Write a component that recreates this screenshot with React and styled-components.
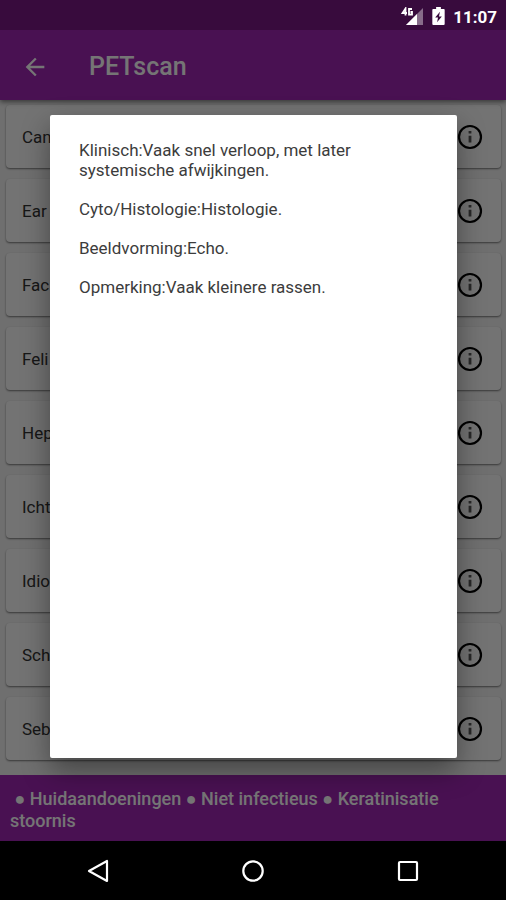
import React from 'react'
import styled, { createGlobalStyle } from 'styled-components'

const GlobalStyle = createGlobalStyle`
  * {
    box-sizing: border-box;
  }
  body {
    margin: 0;
    background: #000;
    font-family: Roboto, sans-serif;
  }
`

const Screen = styled.div`
  display: flex;
  flex-direction: column;
  min-height: 100vh;
`

const Page = styled.div`
  position: relative;
  flex: 1;
  display: flex;
  flex-direction: column;
  background: #f2f2f2;
`

const StatusBar = styled.div`
  position: relative;
  z-index: 2;
  display: flex;
  align-items: center;
  justify-content: flex-end;
  gap: 8px;
  height: 30px;
  padding: 3px 9px 0;
  background: #380b3d;
  color: #fff;
`

const Clock = styled.span`
  font-size: 17px;
  font-weight: 700;
  line-height: 24px;
`

const AppBar = styled.header`
  position: relative;
  display: flex;
  align-items: center;
  gap: 40px;
  height: 70px;
  padding: 3px 21px 0;
  background: #9f25b4;
  color: #fff;
  box-shadow: 0 2px 5px rgba(0, 0, 0, 0.5);
`

const IconButton = styled.button`
  display: flex;
  padding: 0;
  border: 0;
  background: none;
  color: inherit;
`

const Title = styled.h1`
  margin: 0;
  font-size: 25px;
  font-weight: 500;
  line-height: 30px;
`

const List = styled.ul`
  flex: 1;
  display: flex;
  flex-direction: column;
  gap: 11px;
  margin: 0;
  padding: 5px 5px 15px 6px;
  list-style: none;
`

const Card = styled.li`
  display: flex;
  align-items: center;
  justify-content: space-between;
  height: 63px;
  padding: 0 18px 0 16px;
  border-radius: 4px;
  background: #fafafa;
  box-shadow: 0 1px 2px rgba(0, 0, 0, 0.5);
  color: #333;
  font-size: 17px;
`

const Path = styled.footer`
  padding: 13px 10px 9px;
  background: #9f25b4;
  color: #fff;
  font-size: 18px;
  font-weight: 500;
  line-height: 22px;
`

const Scrim = styled.div`
  position: absolute;
  inset: 0;
  z-index: 1;
  display: flex;
  padding: 115px 49px 83px 50px;
  background: rgba(0, 0, 0, 0.54);
`

const Dialog = styled.div`
  flex: 1;
  padding: 25px 29px;
  border-radius: 2px;
  background: #fff;
  box-shadow: 0 12px 28px rgba(0, 0, 0, 0.4);
  color: #3c3c3c;
  font-size: 17px;
  line-height: 20px;
`

const Paragraph = styled.p`
  margin: 0 0 19px;
`

const NavBar = styled.nav`
  display: flex;
  align-items: center;
  justify-content: space-around;
  height: 59px;
  padding: 0 21px;
  background: #000;
  color: #fff;
`

const items = ['Can', 'Ear', 'Fac', 'Feli', 'Hep', 'Icht', 'Idio', 'Sch', 'Seb']

const details = [
  'Klinisch:Vaak snel verloop, met later systemische afwijkingen.',
  'Cyto/Histologie:Histologie.',
  'Beeldvorming:Echo.',
  'Opmerking:Vaak kleinere rassen.',
]

const SignalIcon = () => (
  <svg width="23" height="20" viewBox="0 0 23 20">
    <path d="M22 1v17H5z" fill="#fff" opacity="0.4" />
    <path d="M16 7v11H5z" fill="#fff" />
    <path d="M0 0h12v9H0z" fill="#380b3d" />
    <g fill="none" stroke="#fff" strokeWidth="1.8">
      <path d="M4.500 8.500V1.500L1.500 6H6" />
      <path d="M11 2H8v5.500h3V5H9.500" />
    </g>
  </svg>
)

const BatteryIcon = () => (
  <svg width="13" height="19" viewBox="0 0 13 20">
    <path d="M4 0h5v2h3q1 0 1 1v15q0 1-1 1H1q-1 0-1-1V3q0-1 1-1h3z" fill="#fff" />
    <path d="M8 5L3 11h3l-1 5 5-6H7z" fill="#380b3d" />
  </svg>
)

const InfoIcon = () => (
  <svg width="26" height="26" viewBox="0 0 26 26">
    <circle cx="13" cy="13" r="11" fill="none" stroke="#000" strokeWidth="2.200" />
    <path d="M11.600 7h2.800v2.400h-2.800zM11.600 11.800h2.800v6.700h-2.800z" fill="#555" />
  </svg>
)

const App = () => {
  return (
    <Screen>
      <GlobalStyle />
      <Page>
        <StatusBar>
          <SignalIcon />
          <BatteryIcon />
          <Clock>11:07</Clock>
        </StatusBar>
        <AppBar>
          <IconButton aria-label="Terug">
            <svg width="28" height="28" viewBox="0 0 24 24">
              <path d="M20 11H7.830l5.590-5.590L12 4l-8 8 8 8 1.410-1.410L7.830 13H20z" fill="currentColor" />
            </svg>
          </IconButton>
          <Title>PETscan</Title>
        </AppBar>
        <List>
          {items.map((item) => (
            <Card key={item}>
              {item}
              <IconButton aria-label="Info">
                <InfoIcon />
              </IconButton>
            </Card>
          ))}
        </List>
        <Path>&nbsp;● Huidaandoeningen ● Niet infectieus ● Keratinisatie stoornis</Path>
        <Scrim>
          <Dialog role="dialog" aria-modal="true">
            {details.map((text) => (
              <Paragraph key={text}>{text}</Paragraph>
            ))}
          </Dialog>
        </Scrim>
      </Page>
      <NavBar>
        <IconButton aria-label="Vorige">
          <svg width="24" height="26" viewBox="0 0 24 26">
            <path d="M21 3v20L3 13z" fill="none" stroke="currentColor" strokeWidth="2.200" strokeLinejoin="round" />
          </svg>
        </IconButton>
        <IconButton aria-label="Start">
          <svg width="24" height="24" viewBox="0 0 24 24">
            <circle cx="12" cy="12" r="9.700" fill="none" stroke="currentColor" strokeWidth="2.200" />
          </svg>
        </IconButton>
        <IconButton aria-label="Overzicht">
          <svg width="24" height="24" viewBox="0 0 24 24">
            <rect x="3" y="3" width="18" height="18" rx="1" fill="none" stroke="currentColor" strokeWidth="2.200" />
          </svg>
        </IconButton>
      </NavBar>
    </Screen>
  )
}

export default App
